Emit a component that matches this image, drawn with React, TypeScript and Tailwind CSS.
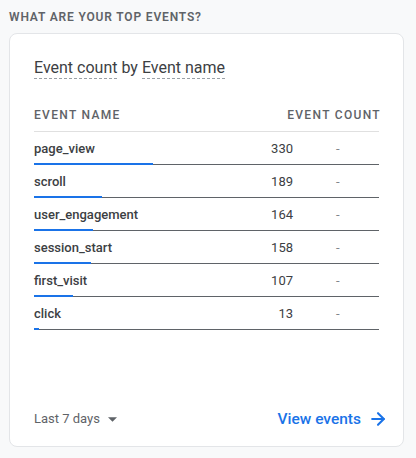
import { ArrowRight } from "lucide-react";

type EventRow = {
  name: string;
  count: number;
};

const rows: EventRow[] = [
  { name: "page_view", count: 330 },
  { name: "scroll", count: 189 },
  { name: "user_engagement", count: 164 },
  { name: "session_start", count: 158 },
  { name: "first_visit", count: 107 },
  { name: "click", count: 13 },
];

const BAR_MAX = 119;

export default function App() {
  const max = Math.max(...rows.map((r) => r.count));

  return (
    <div
      className="h-[458px] w-[416px] bg-[#f8f9fa] pt-[8px] pr-[12px] pl-[9px]"
      style={{ fontFamily: "Roboto, 'Liberation Sans', sans-serif" }}
    >
      <h2 className="text-[12px] leading-[18px] font-semibold tracking-[0.07em] text-[#5f6368]">
        WHAT ARE YOUR TOP EVENTS?
      </h2>

      <div className="mt-[7px] flex h-[414px] flex-col rounded-lg border border-[#e3e5e8] bg-white px-[24px] pt-[24px] pb-[17px]">
        {/* Card title */}
        <div className="flex text-[16px] leading-[20px] text-[#3c4043]">
          <span className="border-b border-dashed border-[#9aa0a6]">Event count</span>
          <span className="mx-[4px]">by</span>
          <span className="border-b border-dashed border-[#9aa0a6]">Event name</span>
        </div>

        {/* Table header */}
        <div className="mt-[28px] flex items-center justify-between border-b border-[#e0e0e0] pb-[8px] text-[12px] leading-[16px] font-medium tracking-[0.11em] text-[#5f6368]">
          <span>EVENT NAME</span>
          <span className="-mr-[2px]">EVENT COUNT</span>
        </div>

        {/* Rows */}
        <div className="flex flex-col">
          {rows.map((row) => (
            <div key={row.name} className="flex h-[33px] flex-col">
              <div className="flex flex-1 items-center pt-[1px] text-[13px] text-[#3c4043]">
                <span className="flex-1 font-medium">{row.name}</span>
                <span className="w-[30px] text-right">{row.count}</span>
                <span className="ml-[43px] w-[10px] text-[#80868b]">-</span>
                <span className="w-[33px]" />
              </div>
              <div className="relative h-[1px] bg-[#5f6368]">
                <div
                  className="absolute bottom-0 left-0 h-[2px] bg-[#1a73e8]"
                  style={{ width: `${Math.max(3, (row.count / max) * BAR_MAX)}px` }}
                />
              </div>
            </div>
          ))}
        </div>

        {/* Footer */}
        <div className="mt-auto flex items-center justify-between">
          <button className="flex items-center text-[13px] leading-[20px] text-[#5f6368]">
            Last 7 days
            <svg width="9" height="5" viewBox="0 0 10 5" className="ml-[8px]">
              <path d="M0 0 L10 0 L5 5 Z" fill="#5f6368" />
            </svg>
          </button>
          <button className="-mr-[9px] flex items-center text-[15.5px] leading-[20px] font-medium text-[#1a73e8]">
            View events
            <ArrowRight size={20} strokeWidth={2.5} className="ml-[7px]" />
          </button>
        </div>
      </div>
    </div>
  );
}
